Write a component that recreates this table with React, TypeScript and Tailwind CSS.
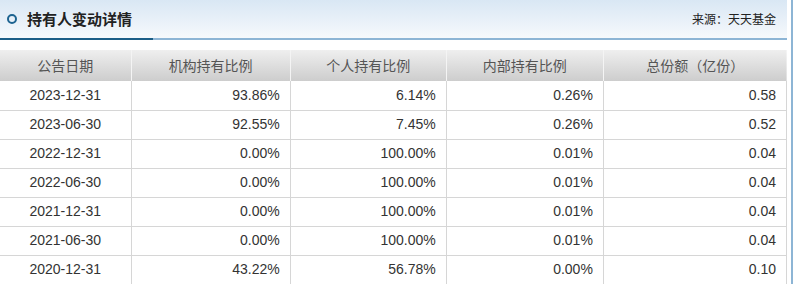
const ROWS = [
  ['2023-12-31', '93.86%', '6.14%', '0.26%', '0.58'],
  ['2023-06-30', '92.55%', '7.45%', '0.26%', '0.52'],
  ['2022-12-31', '0.00%', '100.00%', '0.01%', '0.04'],
  ['2022-06-30', '0.00%', '100.00%', '0.01%', '0.04'],
  ['2021-12-31', '0.00%', '100.00%', '0.01%', '0.04'],
  ['2021-06-30', '0.00%', '100.00%', '0.01%', '0.04'],
  ['2020-12-31', '43.22%', '56.78%', '0.00%', '0.10'],
]

const HEADS = ['公告日期', '机构持有比例', '个人持有比例', '内部持有比例', '总份额（亿份）']
const WIDTHS = ['w-[131px]', 'w-[159px]', 'w-[156px]', 'w-[157px]', 'w-[183px]']

const cjk = "font-['Noto_Sans_CJK_SC',sans-serif]"

export default function App() {
  return (
    <div className="flex h-[284px] w-[795px] overflow-hidden bg-white">
      <div className="w-[787px]">
        {/* title bar */}
        <div className="flex h-[38px] items-center justify-between bg-gradient-to-b from-[#d9e7f4] to-[#f6f9fc] pl-[7px] pr-[11px]">
          <div className="flex items-center gap-[10px]">
            <span className="h-[10px] w-[10px] rounded-full border-[2.5px] border-[#1d6390]" />
            <span className={`${cjk} text-[15px] font-bold text-[#222]`}>持有人变动详情</span>
          </div>
          <span className={`${cjk} text-[12px] text-[#222]`}>来源：天天基金</span>
        </div>
        <div className="flex h-[2px]">
          <div className="w-[153px] bg-[#1b5e87]" />
          <div className="flex-1 bg-[#8db5d5]" />
        </div>

        <table className="mt-[10px] w-[787px] table-fixed border-collapse">
          <thead>
            <tr className="h-[31px] bg-gradient-to-b from-[#efefef] to-[#cdcdcd]">
              {HEADS.map((h, i) => (
                <th
                  key={h}
                  className={`${WIDTHS[i]} ${cjk} border-l border-[#f4f4f4] p-0 text-center text-[14px] font-normal text-[#555] first:border-l-0`}
                >
                  {h}
                </th>
              ))}
            </tr>
          </thead>
          <tbody>
            {ROWS.map((r) => (
              <tr key={r[0]} className="h-[29px] border-b border-[#d6d6d6]">
                {r.map((c, i) => (
                  <td
                    key={i}
                    className={`border-r border-[#d6d6d6] p-0 font-['Liberation_Sans',Arial,sans-serif] text-[14px] text-[#333] ${
                      i === 0 ? 'text-center' : 'pr-[10px] text-right'
                    }`}
                  >
                    {c}
                  </td>
                ))}
              </tr>
            ))}
          </tbody>
        </table>
      </div>
      <div className="ml-[4px] h-full w-[2px] bg-[#8db5d5]" />
    </div>
  )
}
